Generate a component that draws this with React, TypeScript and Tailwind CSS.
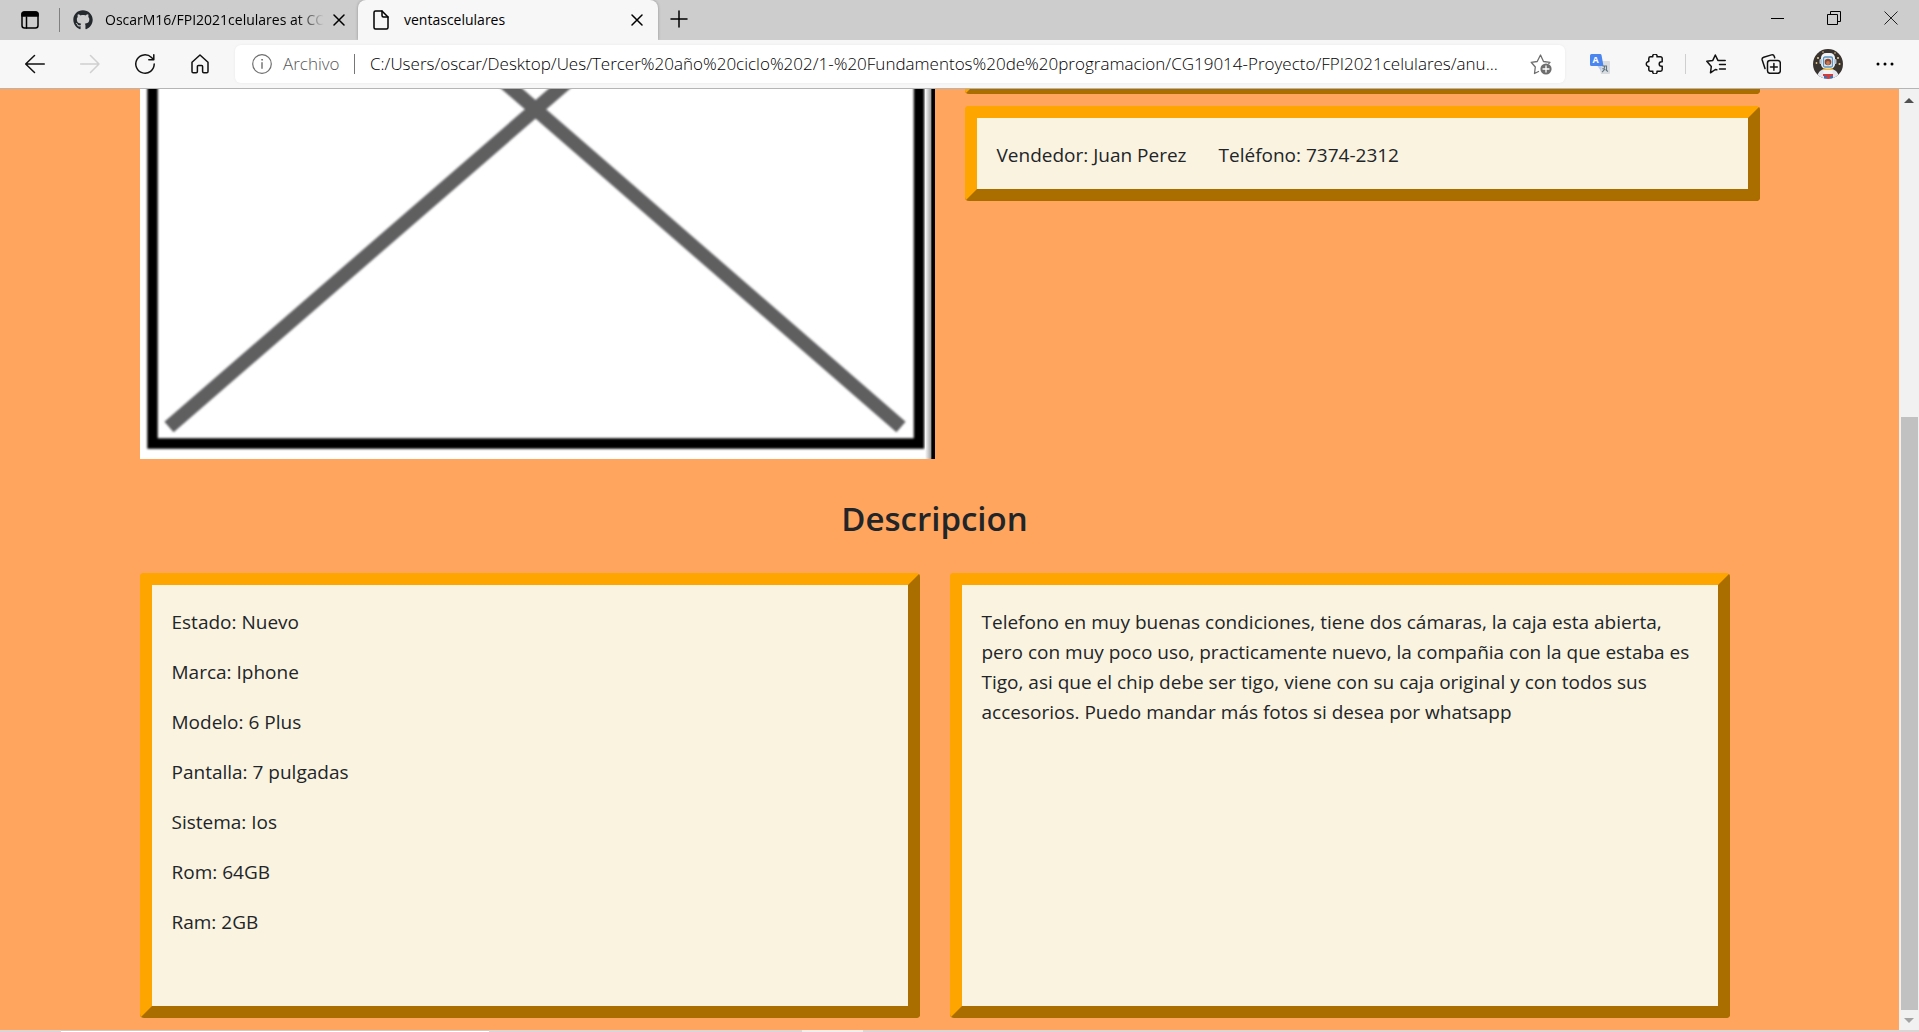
import React from "react";
import { FaGithub } from "react-icons/fa";

type IconProps = { className?: string; children: React.ReactNode; size?: number };

function Icon({ className = "", children, size = 20 }: IconProps) {
  return (
    <svg
      viewBox={`0 0 ${size} ${size}`}
      width={size}
      height={size}
      fill="none"
      stroke="currentColor"
      strokeWidth="1.5"
      strokeLinecap="round"
      strokeLinejoin="round"
      aria-hidden="true"
      className={`shrink-0 ${className}`}
    >
      {children}
    </svg>
  );
}

function ToolButton({ label, className = "w-10", children }: { label: string; className?: string; children: React.ReactNode }) {
  return (
    <button aria-label={label} className={`flex h-[38px] shrink-0 items-center justify-center ${className}`}>
      {children}
    </button>
  );
}

function CloseGlyph() {
  return (
    <Icon size={12}>
      <path d="M1 1l10 10M11 1L1 11" />
    </Icon>
  );
}

function TabStrip() {
  return (
    <header className="flex h-10 shrink-0 items-stretch bg-[#cdcdcd] text-[14px] text-black">
      <button aria-label="Acciones de pestañas" className="flex w-[59px] shrink-0 items-center justify-center">
        <Icon>
          <rect x="2" y="2" width="16" height="16" rx="2.5" />
          <path d="M2 6V4.500A2.500 2.500 0 0 1 4.500 2h11A2.500 2.500 0 0 1 18 4.500V6z" fill="currentColor" />
          <path d="M6.500 7v11" />
        </Icon>
      </button>
      <div className="flex w-[299px] shrink-0 items-center">
        <span className="h-6 w-px bg-[#808080]" />
        <FaGithub className="ml-[13px] size-5 shrink-0 text-[#24292e]" aria-hidden="true" />
        <span className="ml-3 shrink-0 whitespace-nowrap bg-linear-to-r from-black from-88% to-transparent bg-clip-text pb-0.5 text-transparent">
          OscarM16/FPI2021celulares at CC
        </span>
        <button aria-label="Cerrar pestaña" className="ml-auto mr-[9px] flex size-5 shrink-0 items-center justify-center">
          <CloseGlyph />
        </button>
      </div>
      <div className="flex w-[300px] shrink-0 items-center rounded-t-lg bg-[#f7f7f7] pl-[13px] pr-[11px] shadow-[0_0_3px_rgba(0,0,0,0.3)] [clip-path:inset(0_-4px_0_-4px)]">
        <Icon>
          <path d="M4.500 1H11l6 6v10.500a1.500 1.500 0 0 1-1.500 1.500h-11A1.500 1.500 0 0 1 3 17.500v-15A1.500 1.500 0 0 1 4.500 1z" />
          <path d="M11 1v4.500A1.500 1.500 0 0 0 12.500 7H17" />
        </Icon>
        <span className="ml-[13px] pb-0.5">ventascelulares</span>
        <button aria-label="Cerrar pestaña" className="ml-auto flex size-5 items-center justify-center">
          <CloseGlyph />
        </button>
      </div>
      <button aria-label="Nueva pestaña" className="flex w-[42px] shrink-0 items-center justify-center pb-0.5">
        <Icon size={18}>
          <path d="M9 1v16M1 9h16" />
        </Icon>
      </button>
      <div className="ml-auto flex">
        <button aria-label="Minimizar" className="flex w-[57px] items-center justify-center pb-1">
          <svg width="14" height="14" viewBox="0 0 14 14" aria-hidden="true">
            <path d="M1 7.500h13" stroke="#000" />
          </svg>
        </button>
        <button aria-label="Restaurar" className="flex w-[57px] items-center justify-center pb-1">
          <svg width="14" height="14" viewBox="0 0 14 14" fill="none" stroke="#000" aria-hidden="true">
            <path d="M.500 3.500h10v10h-10zM3.500 3.500v-3h10v10h-3" />
          </svg>
        </button>
        <button aria-label="Cerrar" className="flex w-[57px] items-center justify-center pb-1">
          <svg width="14" height="14" viewBox="0 0 14 14" stroke="#222" aria-hidden="true">
            <path d="M.500.500l13 13M13.500.500l-13 13" />
          </svg>
        </button>
      </div>
    </header>
  );
}

function Avatar() {
  return (
    <svg width="30" height="30" viewBox="0 0 30 30" aria-hidden="true" className="rounded-full">
      <rect width="30" height="30" fill="#3a3430" />
      <g fill="#e8c98a">
        <circle cx="5" cy="9" r="1.100" />
        <circle cx="25" cy="9" r="1.100" />
        <circle cx="3.500" cy="14" r=".9" />
        <circle cx="26.500" cy="15" r="1" />
        <circle cx="10" cy="3" r=".8" />
        <circle cx="22" cy="4" r=".8" />
      </g>
      <path d="M4 30c0-6 3-9 7-10h8c4 1 7 4 7 10z" fill="#e4e8ee" />
      <rect x="8" y="4" width="14" height="16" rx="5" fill="#f1f3f6" />
      <rect x="6.500" y="10" width="2.500" height="5" rx="1" fill="#b9c4d2" />
      <rect x="21" y="10" width="2.500" height="5" rx="1" fill="#b9c4d2" />
      <rect x="10.500" y="8" width="9" height="10" rx="1.500" fill="#dbe9f5" stroke="#5b94bd" strokeWidth="1.300" />
      <circle cx="15" cy="13" r="3.300" fill="#8b4630" />
      <circle cx="15" cy="14" r="1.900" fill="#c77a55" />
      <rect x="10" y="19.500" width="10" height="1.500" fill="#f0b93a" />
      <path d="M10.500 21h9v4h-9z" fill="#f3f3f3" />
      <path d="M10 25h10v2H10z" fill="#d23c3c" />
      <path d="M11 27h3v3h-3zM17 27h3v3h-3z" fill="#3d6fb0" />
      <path d="M14 27h3v3h-3z" fill="#d23c3c" />
    </svg>
  );
}

function Toolbar() {
  return (
    <nav className="flex h-[49px] shrink-0 items-center gap-[15px] border-b border-[#b5b5b5] bg-[#f7f7f7] pl-[15px] pr-[14px] pb-px text-[#111]">
      <ToolButton label="Atrás">
        <Icon>
          <path d="M.700 10h18.600M9.500 1.500L.700 10l8.800 8.500" />
        </Icon>
      </ToolButton>
      <ToolButton label="Adelante">
        <Icon className="text-[#d0d0d0]">
          <path d="M.500 10H19M10.500 1.500L19 10l-8.500 8.500" />
        </Icon>
      </ToolButton>
      <ToolButton label="Actualizar">
        <Icon>
          <path d="M19.200 10a9.200 9.200 0 1 1-2.700-6.500L18.500 5.500M18.800.800v5h-5" />
        </Icon>
      </ToolButton>
      <ToolButton label="Inicio">
        <Icon>
          <path d="M2 8.300L10 1l8 7.300v9.200c0 .8-.5 1.300-1.200 1.300h-3c-.7 0-1.200-.5-1.200-1.200V12.500c0-.6-.4-1-1-1H8.400c-.6 0-1 .4-1 1v5.100c0 .7-.5 1.200-1.200 1.200h-3c-.7 0-1.200-.5-1.200-1.300z" />
        </Icon>
      </ToolButton>
      <div className="flex h-[38px] min-w-0 flex-1 items-center rounded-md bg-white pl-[17px] pr-[13px] shadow-[0_0_3px_rgba(0,0,0,0.06)]">
        <Icon className="text-[#6e6e6e]">
          <circle cx="10" cy="10" r="9.300" strokeWidth="1.200" />
          <path d="M10 8.700v5.500" strokeWidth="1.400" />
          <circle cx="10" cy="5.800" r=".5" fill="currentColor" strokeWidth=".8" />
        </Icon>
        <label htmlFor="url" className="ml-[11px] w-[62px] shrink-0 text-[17px] font-light text-[#555]">
          Archivo
        </label>
        <span className="ml-[9px] h-5 w-px shrink-0 bg-[#767676]" />
        <input
          id="url"
          type="text"
          className="ml-[15px] min-w-0 flex-1 bg-transparent text-[17px] font-light text-black outline-none"
          defaultValue="C:/Users/oscar/Desktop/Ues/Tercer%20año%20ciclo%202/1-%20Fundamentos%20de%20programacion/CG19014-Proyecto/FPI2021celulares/anu..."
        />
        <button aria-label="Agregar a favoritos" className="shrink-0">
          <Icon size={22} className="text-[#6e6e6e]">
            <path d="M8.500 18.500l-4 2 .8-6.500L1.200 9.300l6-.8L10.500 2l3 6.500 6.500.8-1.200 1.200" strokeWidth="1.300" />
            <circle cx="16" cy="16" r="5.600" fill="currentColor" stroke="none" />
            <path d="M16 13v6M13 16h6" stroke="#fff" strokeWidth="1.300" />
          </Icon>
        </button>
      </div>
      <ToolButton label="Traductor">
        <svg width="20" height="20" viewBox="0 0 20 20" aria-hidden="true">
          <path d="M8 7h11a1 1 0 0 1 1 1v11a1 1 0 0 1-1 1h-8z" fill="#d9dcde" />
          <path d="M7.500 12h4L11 17z" fill="#b9cdf0" />
          <path d="M1.500 0h8.500a1.500 1.500 0 0 1 1.500 1l2 11H1.500A1.500 1.500 0 0 1 0 10.500V1.500A1.500 1.500 0 0 1 1.500 0z" fill="#4a86ee" />
          <text x="2.500" y="9" fontSize="9" fontWeight="700" fill="#fff">A</text>
          <path d="M12.500 12h4v4.500l1.500 1M14.500 12c0 3.500-.5 5-2.500 6M12.500 14.500l3 1.500" fill="none" stroke="#5d7482" strokeWidth="1.100" />
        </svg>
      </ToolButton>
      <div className="flex items-center gap-[10px]">
        <ToolButton label="Extensiones">
          <Icon>
            <path d="M5.500 2.800h2.300a2.200 2.200 0 1 1 4.200 0h3.500A1.700 1.700 0 0 1 17.200 4.500v3.200h-.7a2.300 2.300 0 0 0 0 4.600h.7v3.200a1.700 1.700 0 0 1-1.700 1.700H12a2.200 2.200 0 1 1-4.200 0H5.500a1.700 1.700 0 0 1-1.700-1.700v-3a2.500 2.500 0 1 1 0-5v-3A1.700 1.700 0 0 1 5.500 2.800z" />
          </Icon>
        </ToolButton>
        <span className="h-5 w-px bg-[#cfcfcf]" />
        <ToolButton label="Favoritos">
          <Icon>
            <path d="M10.800 15.800l-1.500-.3-4.800 3.300.8-6.300L.800 7.300l6-.9L9.300 1l2.600 5.400h7.300M13.500 10.500h6M13.500 15h6" />
          </Icon>
        </ToolButton>
      </div>
      <ToolButton label="Colecciones">
        <Icon>
          <rect x="6.500" y="6.500" width="12.800" height="12.800" rx="2.500" />
          <path d="M12.900 9.500v6.800M9.500 12.900h6.800M4 14.500L1.200 6a2.300 2.300 0 0 1 1.500-2.800L10.500.900a2.300 2.300 0 0 1 2.800 1.500l.4 1.300" />
        </Icon>
      </ToolButton>
      <ToolButton label="Perfil" className="w-11">
        <Avatar />
      </ToolButton>
      <ToolButton label="Más opciones">
        <svg width="18" height="4" viewBox="0 0 18 4" aria-hidden="true">
          <circle cx="2" cy="2" r="1.500" />
          <circle cx="9" cy="2" r="1.500" />
          <circle cx="16" cy="2" r="1.500" />
        </svg>
      </ToolButton>
    </nav>
  );
}

function Card({ className = "", children }: { className?: string; children?: React.ReactNode }) {
  return (
    <div
      className={`rounded border-12 border-t-[#ffa500] border-r-[#aa6e00] border-b-[#aa6e00] border-l-[#ffa500] bg-[#faf3e0] px-5 pt-[22px] ${className}`}
    >
      {children}
    </div>
  );
}

function PhonePicture() {
  return (
    <svg viewBox="0 0 795 370" role="img" aria-label="Foto del teléfono" className="block h-auto w-full">
      <defs>
        <filter id="soft" x="-5%" y="-5%" width="110%" height="110%">
          <feGaussianBlur stdDeviation="1" />
        </filter>
        <linearGradient id="edge">
          <stop offset="0" stopColor="#fff" />
          <stop offset=".55" stopColor="#aaa" />
          <stop offset=".7" stopColor="#000" />
        </linearGradient>
      </defs>
      <rect width="795" height="370" fill="#fff" />
      <g filter="url(#soft)" fill="none">
        <path d="M12.500 -10V354.500H779V-10" stroke="#000" strokeWidth="10.500" />
        <path d="M456 -32L29 338M333 -34L761 338" stroke="#5e5e60" strokeWidth="14" />
      </g>
      <rect x="785" width="10" height="370" fill="url(#edge)" />
    </svg>
  );
}

const specs = [
  "Estado: Nuevo",
  "Marca: Iphone",
  "Modelo: 6 Plus",
  "Pantalla: 7 pulgadas",
  "Sistema: Ios",
  "Rom: 64GB",
  "Ram: 2GB",
];

function Listing() {
  return (
    <main className="min-w-0 flex-1 overflow-hidden bg-[#ffa55e] text-[19px] leading-[30px] text-[#212529]">
      <div className="mx-auto w-full max-w-[1620px]">
        <section className="grid grid-cols-2 gap-[30px]">
          <PhonePicture />
          <div>
            <div className="flex h-[5px] items-end overflow-hidden">
              <Card className="h-24 w-full shrink-0" />
            </div>
            <Card className="mt-3 flex gap-8 pb-[19px]">
              <p>Vendedor: Juan Perez</p>
              <p>Teléfono: 7374-2312</p>
            </Card>
          </div>
        </section>
        <section className="mr-[30px]">
          <h2 className="pt-[38px] text-center text-[33px] leading-[44px] font-semibold">Descripcion</h2>
          <div className="mt-8 grid grid-cols-2 gap-[30px]">
            <Card className="flex min-h-[445px] flex-col gap-5">
              {specs.map((spec) => (
                <p key={spec}>{spec}</p>
              ))}
            </Card>
            <Card>
              <p>
                Telefono en muy buenas condiciones, tiene dos cámaras, la caja esta abierta, pero con muy poco uso,
                practicamente nuevo, la compañia con la que estaba es Tigo, asi que el chip debe ser tigo, viene con su
                caja original y con todos sus accesorios. Puedo mandar más fotos si desea por whatsapp
              </p>
            </Card>
          </div>
        </section>
      </div>
    </main>
  );
}

function Scrollbar() {
  return (
    <div className="flex w-5 shrink-0 flex-col items-center bg-[#f1f1f1]">
      <div className="flex h-[21px] shrink-0 items-center pt-0.5">
        <svg width="10" height="5" viewBox="0 0 10 5" aria-hidden="true">
          <path d="M0 5l5-5 5 5z" fill="#505050" />
        </svg>
      </div>
      <div className="flex w-[17px] flex-1 flex-col">
        <div className="flex-[307]" />
        <div className="flex-[593] bg-[#c1c1c1]" />
      </div>
      <div className="flex h-5 shrink-0 items-center">
        <svg width="10" height="5" viewBox="0 0 10 5" aria-hidden="true">
          <path d="M0 0l5 5 5-5z" fill="#a3a3a3" />
        </svg>
      </div>
    </div>
  );
}

export default function App() {
  return (
    <div className="flex h-screen flex-col overflow-hidden font-['Open_Sans','Noto_Sans',sans-serif]">
      <TabStrip />
      <Toolbar />
      <div className="flex min-h-0 flex-1">
        <Listing />
        <Scrollbar />
      </div>
      <div className="flex h-0.5 shrink-0 bg-[#ddd5d5]">
        <span className="ml-[61px] w-[428px] border-t border-[#ccc] bg-white" />
        <span className="ml-[313px] w-[61px] bg-[#f3eeee]" />
      </div>
    </div>
  );
}
